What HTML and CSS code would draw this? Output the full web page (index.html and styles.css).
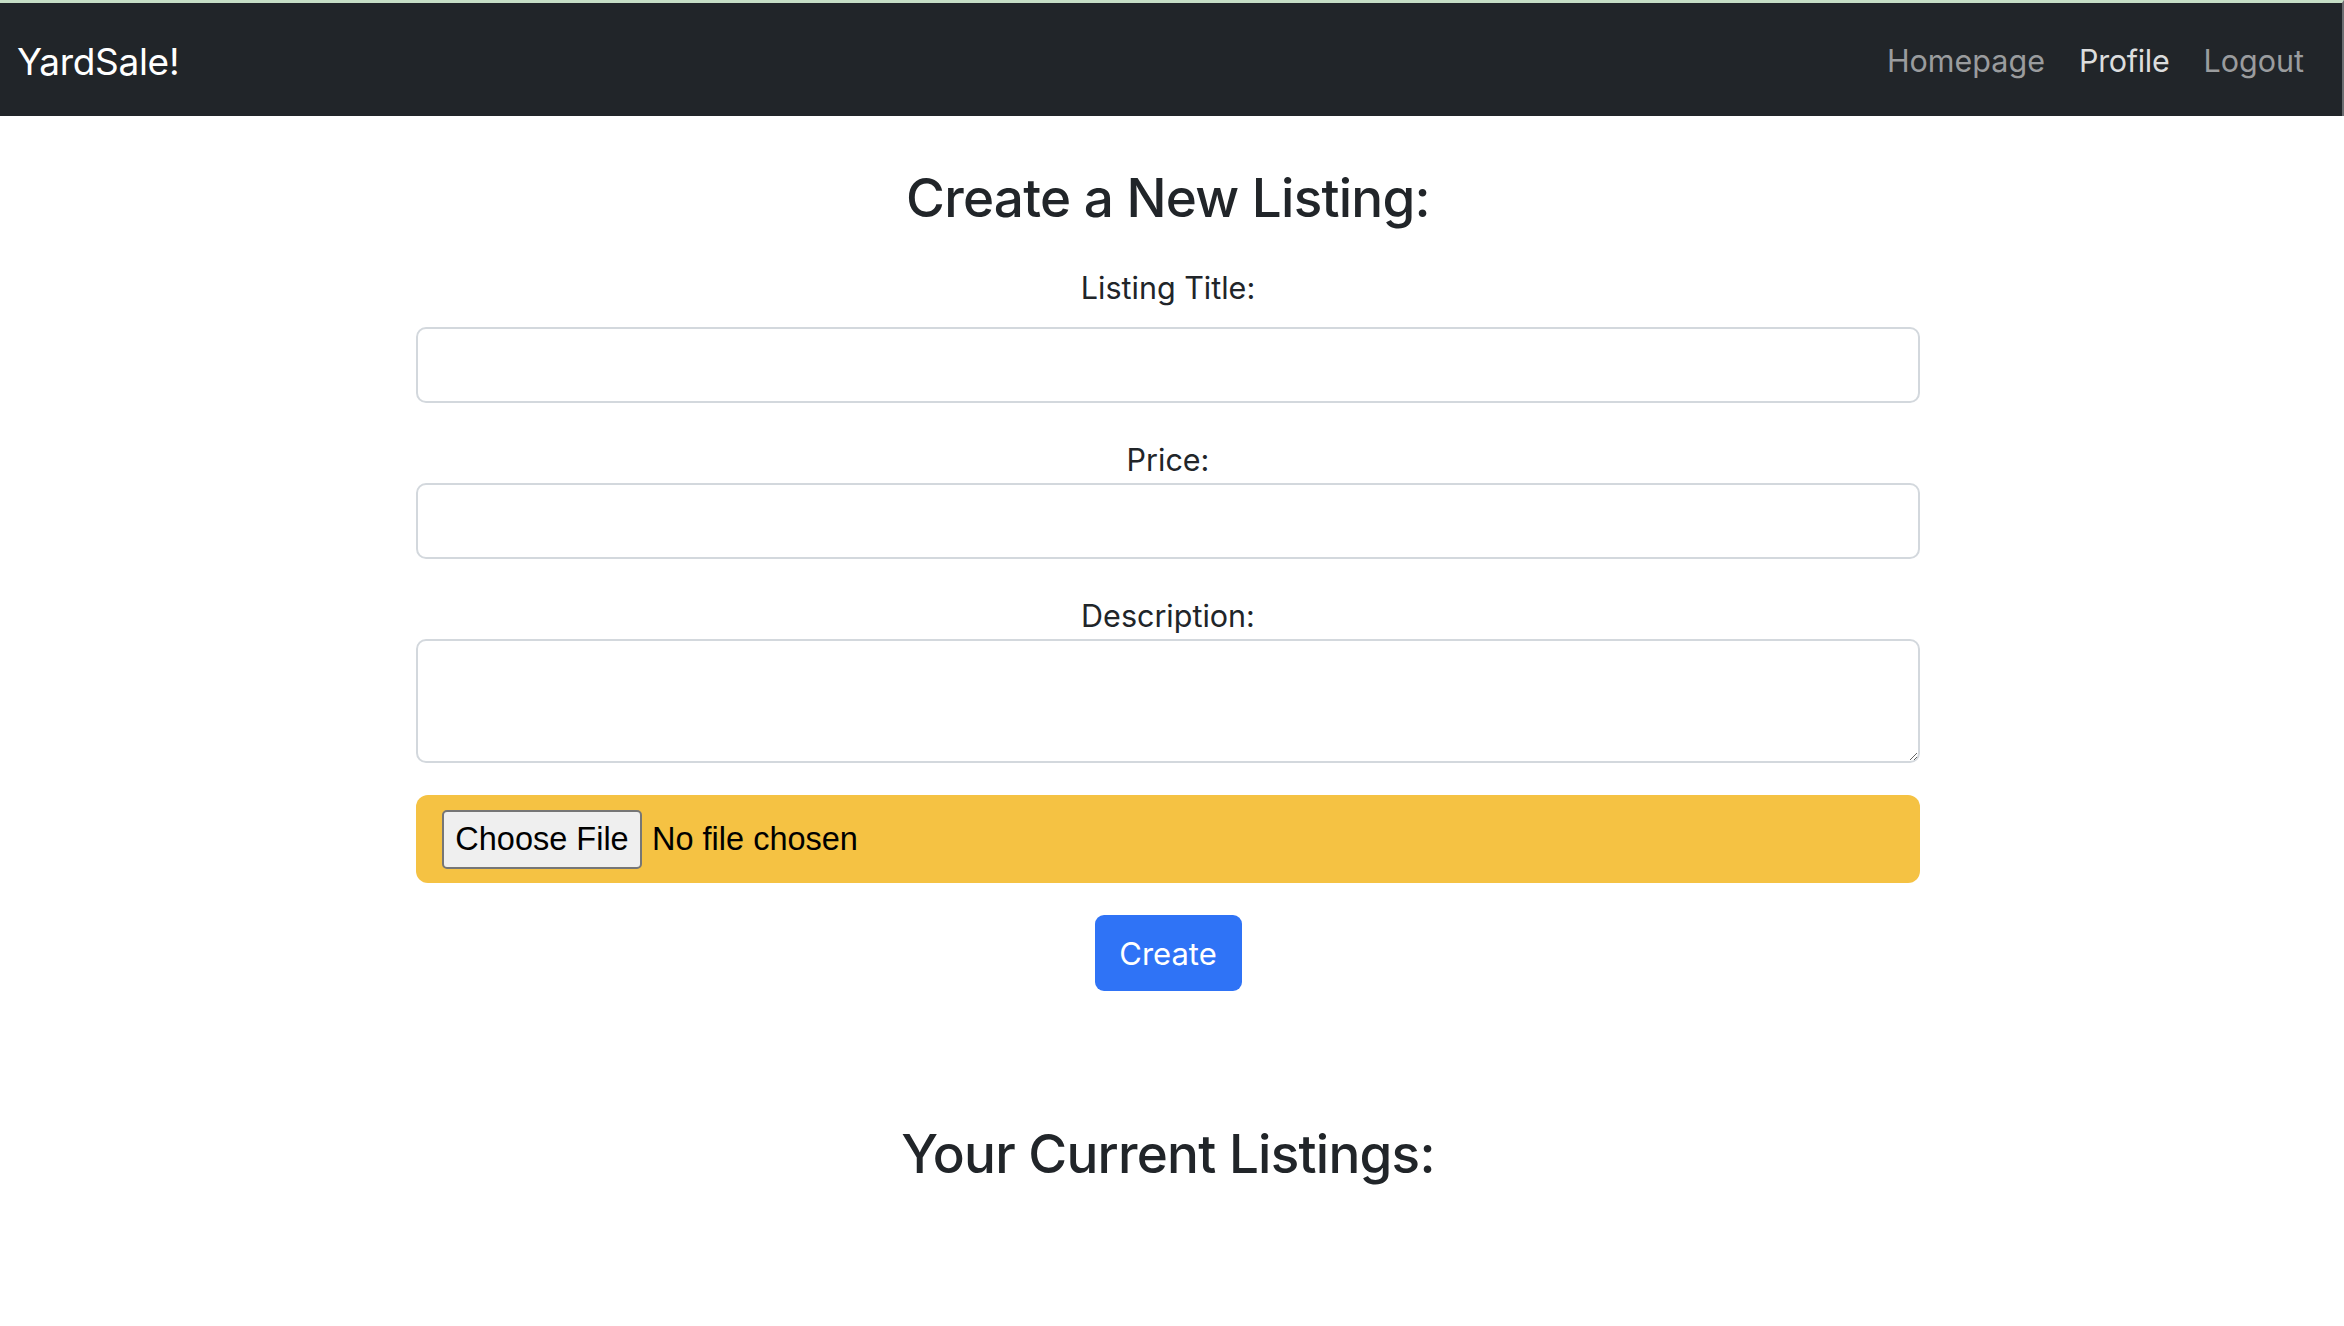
FILE: index.html
```html
<!DOCTYPE html>
<html lang="en">
<head>
<meta charset="utf-8">
<title>YardSale!</title>
<link rel="stylesheet" href="styles.css">
</head>
<body>
<nav class="navbar">
  <a class="brand" href="#">YardSale!</a>
  <div class="nav-links">
    <a class="nav-link" href="#">Homepage</a>
    <a class="nav-link active" href="#">Profile</a>
    <a class="nav-link" href="#">Logout</a>
  </div>
</nav>
<main class="page">
  <div class="container">
    <h2 class="heading">Create a New Listing:</h2>
    <form class="listing-form">
      <label class="field-label title-label" for="title">Listing Title:</label>
      <input class="field" id="title" type="text">
      <label class="field-label" for="price">Price:</label>
      <input class="field" id="price" type="text">
      <label class="field-label" for="desc">Description:</label>
      <textarea class="field area" id="desc"></textarea>
      <label class="file-box">
        <span class="file-btn">Choose File</span>
        <span class="file-name">No file chosen</span>
        <input class="file-input" type="file">
      </label>
      <div class="actions">
        <button class="btn-create" type="button">Create</button>
      </div>
    </form>
    <h2 class="heading current">Your Current Listings:</h2>
  </div>
</main>
</body>
</html>
```

FILE: styles.css
```css
* { box-sizing: border-box; }

body {
  margin: 0;
  font-family: Inter, "Noto Sans", sans-serif;
  color: #212529;
  background: #fff;
}

.navbar {
  height: 116px;
  border-top: 3px solid #c6dec6;
  border-right: 2px solid #6b6e71;
  background: #212529;
  display: flex;
  align-items: center;
  justify-content: space-between;
  padding: 4px 38px 0 17px;
}

.brand {
  color: #fff;
  text-decoration: none;
  font-size: 37px;
  line-height: 1;
  letter-spacing: -0.3px;
}

.nav-links {
  display: flex;
  gap: 34px;
}

.nav-link {
  color: #9a9c9e;
  text-decoration: none;
  font-size: 30.5px;
  line-height: 1;
}

.nav-link.active {
  color: #dcdddd;
  letter-spacing: -0.3px;
}

.page {
  display: flex;
  justify-content: center;
  padding: 0 8px 80px 0;
}

.container {
  width: 1504px;
  display: flex;
  flex-direction: column;
}

.heading {
  margin: 50px 0 0;
  font-size: 53px;
  line-height: 64px;
  font-weight: 500;
  text-align: center;
  letter-spacing: -0.75px;
}

.heading.current {
  margin-top: 131px;
}

.listing-form {
  display: flex;
  flex-direction: column;
}

.field-label {
  display: block;
  text-align: center;
  font-size: 30.5px;
  line-height: 41px;
  padding-bottom: 3px;
  margin-top: 36px;
}

.title-label {
  line-height: 44px;
  padding-bottom: 0;
  margin-bottom: 17px;
}

.field {
  display: block;
  width: 100%;
  height: 76px;
  border: 2px solid #d3d8dd;
  border-radius: 10px;
  background: #fff;
  font-family: inherit;
  font-size: 29px;
  padding: 10px 20px;
}

.field.area {
  height: 124px;
  resize: vertical;
}

.file-box {
  margin-top: 32px;
  height: 88px;
  background: #f5c243;
  border-radius: 12px;
  display: flex;
  align-items: center;
  padding: 0 26px;
  gap: 10px;
  font-family: "Liberation Sans", Arial, sans-serif;
  font-size: 32.5px;
  color: #000;
}

.file-btn {
  height: 59px;
  width: 200px;
  display: flex;
  align-items: center;
  justify-content: center;
  background: #efefef;
  border: 2px solid #767676;
  border-radius: 5px;
}

.file-input {
  display: none;
}

.actions {
  display: flex;
  justify-content: center;
  margin-top: 32px;
}

.btn-create {
  width: 147px;
  height: 76px;
  border: none;
  border-radius: 9px;
  background: #2f73f6;
  color: #fff;
  font-family: inherit;
  font-size: 31px;
}
```
